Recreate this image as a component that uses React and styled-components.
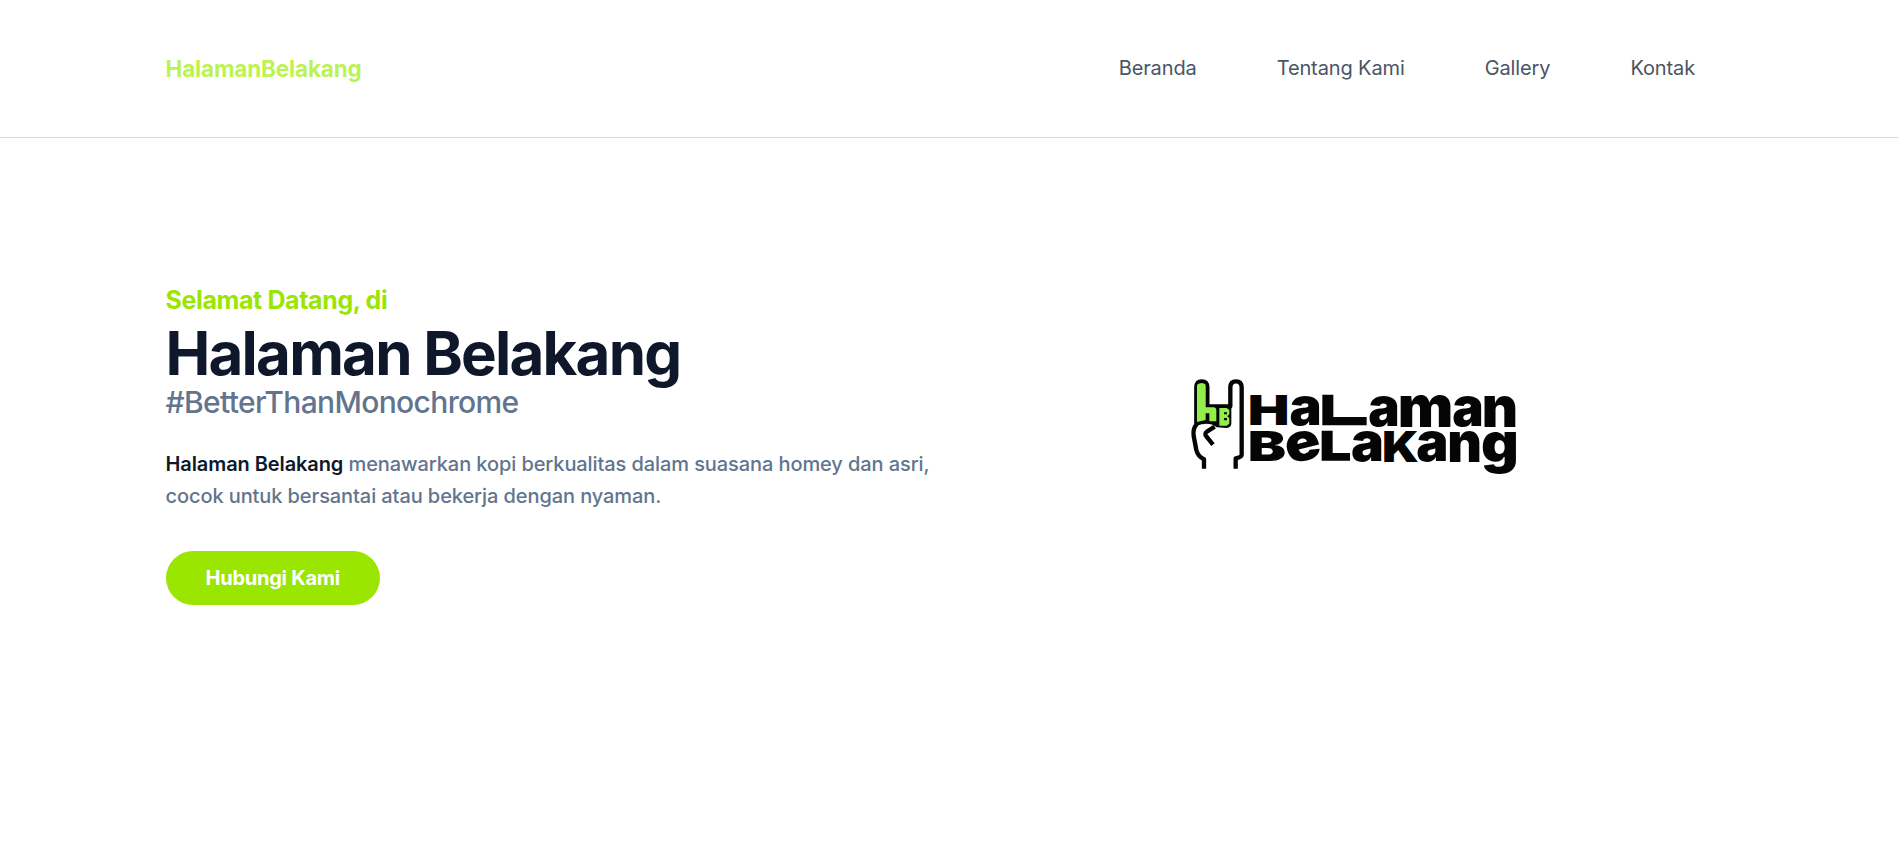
import React from "react";
import styled, { createGlobalStyle } from "styled-components";

const GlobalStyle = createGlobalStyle`
  * { box-sizing: border-box; }
  body {
    margin: 0;
    background: #fff;
    font-family: Inter, "Liberation Sans", sans-serif;
    font-size: 20px;
  }
`;

const Header = styled.header`
  height: 138px;
  padding: 0 163px 0 165.5px;
  display: flex;
  align-items: center;
  justify-content: space-between;
  border-bottom: 1px solid #d9d9d9;
`;

const Brand = styled.a`
  padding-top: 1px;
  font-size: 22.5px;
  font-weight: 700;
  line-height: 30px;
  letter-spacing: -0.15px;
  color: #bbf451;
`;

const Nav = styled.nav`
  display: flex;
`;

const NavLink = styled.a`
  margin: 0 40px;
  padding-bottom: 2px;
  line-height: 30px;
  letter-spacing: -0.12px;
  color: #4a5565;
`;

const Hero = styled.main`
  display: grid;
  grid-template-columns: 784px 1fr;
  padding: 144px 162px 0 165.5px;
`;

const Intro = styled.section`
  display: flex;
  flex-direction: column;
  align-items: flex-start;
`;

const Greeting = styled.p`
  margin: 0 0 5px;
  font-size: 25px;
  font-weight: 650;
  line-height: 36px;
  letter-spacing: -0.38px;
  color: #9ae600;
`;

const Title = styled.h1`
  margin: 0;
  font-size: 60px;
  font-weight: 700;
  line-height: 60px;
  letter-spacing: -1.78px;
  color: #0f172b;
`;

const Tagline = styled.h2`
  margin: 0 0 27px;
  font-size: 30px;
  font-weight: 500;
  line-height: 38px;
  letter-spacing: -0.64px;
  color: #62748e;
`;

const Description = styled.p`
  margin: 0 0 39px;
  font-weight: 500;
  line-height: 32px;
  letter-spacing: -0.09px;
  color: #62748e;

  strong {
    font-weight: 600;
    color: #0f172b;
  }
`;

const Button = styled.a`
  height: 54px;
  padding: 0 40px;
  border-radius: 27px;
  display: flex;
  align-items: center;
  font-weight: 650;
  letter-spacing: -0.24px;
  color: #fff;
  background: #9ae600;
`;

const LogoArt = styled.svg`
  margin: 78px 0 0 220.5px;
  width: 370px;
  height: 130px;
  font-family: Inter, sans-serif;
  font-size: 100px;
  font-weight: 900;
  fill: #050505;
`;

/* Ink bounds [left, right, ascent] of each letter at 100 units */
const INK = {
  H: [4, 71, 73], a: [2, 55, 55], m: [4, 90, 55], n: [4, 60, 55],
  B: [4, 65, 73], e: [3, 58, 55], K: [4, 74, 73], g: [3, 60, 55],
};

/* [letter, left, right, top, baseline, tilt] */
const LETTERS = [
  ["H", 240, 352, 104, 194], ["a", 362, 448, 108, 196],
  ["a", 598, 682, 108, 199], ["m", 690, 842, 108, 202], ["a", 850, 934, 108, 199], ["n", 942, 1036, 108, 202],
  ["B", 240, 345, 212, 302], ["e", 350, 447, 214, 302, -14],
  ["a", 546, 634, 214, 304], ["K", 642, 744, 214, 306], ["a", 742, 828, 214, 304], ["n", 838, 928, 214, 306],
  ["g", 938, 1038, 214, 305],
];

function Letter({ glyph, left, right, top, base, tilt = 0 }) {
  const [l, r, a] = INK[glyph];
  const sx = (right - left) / (r - l);
  const sy = (base - top) / a;
  const turn = `rotate(${tilt} ${(left + right) / 2} ${(top + base) / 2})`;
  return (
    <text transform={`${turn} translate(${left - l * sx} ${base}) scale(${sx} ${sy})`}>
      {glyph}
    </text>
  );
}

function Logo() {
  return (
    <LogoArt viewBox="0 0 1110 390" role="img" aria-label="Halaman Belakang">
      <g fill="none" stroke="#050505" strokeWidth="13" strokeLinejoin="round">
        <path fill="#fff" d="M102 326V298Q84 290 79 270L71 228Q68 207 79 194V82Q79 64 95 64Q112 64 112 82V139H181V82Q181 64 198 64Q215 64 215 82V284Q215 291 197 295V326" />
        <path d="M134 200L112 214Q102 221 109 229L129 254" />
      </g>
      <path d="M75 185V135H184V190Q184 203 170 204L140 202Q118 184 80 197Z" />
      <path fill="#92ee4c" d="M81 77Q82 70 95 70Q107 70 107 77V142H130Q139 142 139 151V184H118V160H107V180L81 186Z" />
      <path fill="#92ee4c" fillRule="evenodd" d="M148 144H170L178 150V163L172 169L178 174V191L170 197H148ZM162 157V163H171V157ZM162 174V181H171V174Z" />
      {LETTERS.map(([glyph, left, right, top, base, tilt]) => (
        <Letter key={`${left}-${top}`} glyph={glyph} left={left} right={right} top={top} base={base} tilt={tilt} />
      ))}
      <path d="M457 104H490V171H590V196H457Z" />
      <path d="M455 212H488V279H540V302H455Z" />
    </LogoArt>
  );
}

export default function App() {
  return (
    <>
      <GlobalStyle />
      <Header>
        <Brand>HalamanBelakang</Brand>
        <Nav>
          <NavLink>Beranda</NavLink>
          <NavLink>Tentang Kami</NavLink>
          <NavLink>Gallery</NavLink>
          <NavLink>Kontak</NavLink>
        </Nav>
      </Header>
      <Hero>
        <Intro>
          <Greeting>Selamat Datang, di</Greeting>
          <Title>Halaman Belakang</Title>
          <Tagline>#BetterThanMonochrome</Tagline>
          <Description>
            <strong>Halaman Belakang</strong> menawarkan kopi berkualitas dalam suasana homey dan asri,
            cocok untuk bersantai atau bekerja dengan nyaman.
          </Description>
          <Button>Hubungi Kami</Button>
        </Intro>
        <Logo />
      </Hero>
    </>
  );
}
